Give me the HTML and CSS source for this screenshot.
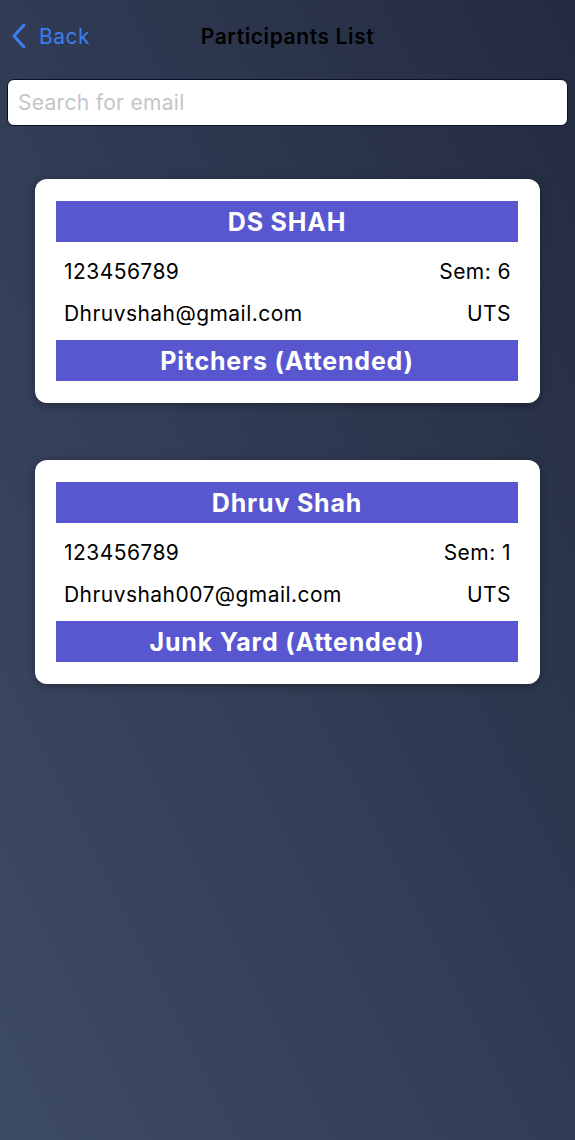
FILE: index.html
```html
<!DOCTYPE html>
<html lang="en">
<head>
<meta charset="utf-8">
<title>Participants List</title>
<link rel="stylesheet" href="styles.css">
</head>
<body>
<div class="screen">
  <header class="navbar">
    <a class="back">
      <svg class="chev" width="16" height="26" viewBox="0 0 16 26"><path d="M13 2 L3 13 L13 24" fill="none" stroke="#3a7ef0" stroke-width="3" stroke-linecap="round" stroke-linejoin="round"/></svg>
      <span>Back</span>
    </a>
    <h1 class="title">Participants List</h1>
  </header>
  <div class="search">
    <input type="text" placeholder="Search for email">
  </div>
  <main class="list">
    <section class="card">
      <div class="bar">DS SHAH</div>
      <div class="row"><span>123456789</span><span>Sem: 6</span></div>
      <div class="row"><span>Dhruvshah@gmail.com</span><span>UTS</span></div>
      <div class="bar">Pitchers (Attended)</div>
    </section>
    <section class="card">
      <div class="bar">Dhruv Shah</div>
      <div class="row"><span>123456789</span><span>Sem: 1</span></div>
      <div class="row"><span>Dhruvshah007@gmail.com</span><span>UTS</span></div>
      <div class="bar">Junk Yard (Attended)</div>
    </section>
  </main>
</div>
</body>
</html>
```

FILE: styles.css
```css
* { box-sizing: border-box; }
html, body { margin: 0; padding: 0; }
body {
  width: 575px;
  height: 1140px;
  font-family: Inter, "Liberation Sans", sans-serif;
  background: linear-gradient(to top right, #3e4b66 0%, #323d56 45%, #232b40 100%);
  overflow: hidden;
}
.screen { display: flex; flex-direction: column; }
.navbar {
  position: relative;
  height: 72px;
  display: flex;
  align-items: center;
  justify-content: center;
}
.back {
  position: absolute;
  left: 11px;
  top: 23px;
  display: flex;
  align-items: center;
  gap: 12px;
  color: #3a7ef0;
  font-size: 21px;
  letter-spacing: 0.5px;
}
.chev { display: block; }
.title {
  margin: 0;
  font-size: 21px;
  font-weight: 600;
  color: #000;
  letter-spacing: 0.6px;
}
.search { padding: 7px 7px 0 7px; }
.search input {
  width: 100%;
  height: 47px;
  border: 1px solid #0a0f2a;
  border-radius: 7px;
  background: #fff;
  padding: 0 10px;
  font-family: Inter, "Liberation Sans", sans-serif;
  font-size: 21px;
  letter-spacing: 0.3px;
  color: #000;
  outline: none;
}
.search input::placeholder { color: #c5c5c8; }
.list {
  display: flex;
  flex-direction: column;
  gap: 57px;
  padding: 53px 35px 0 35px;
}
.card {
  background: #fff;
  border-radius: 12px;
  padding: 22px 22px 22px 21px;
  box-shadow: 0 2px 8px rgba(0,0,0,0.35);
  display: flex;
  flex-direction: column;
}
.bar {
  background: #5857cf;
  color: #fff;
  height: 41px;
  display: flex;
  align-items: center;
  justify-content: center;
  font-size: 25px;
  font-weight: 700;
  letter-spacing: 0.8px;
}
.row {
  display: flex;
  justify-content: space-between;
  align-items: center;
  height: 42px;
  padding: 0 7px 0 8px;
  font-size: 21px;
  letter-spacing: 0.45px;
  color: #000;
}
.bar + .row { margin-top: 8px; }
.row + .bar { margin-top: 6px; }
```
